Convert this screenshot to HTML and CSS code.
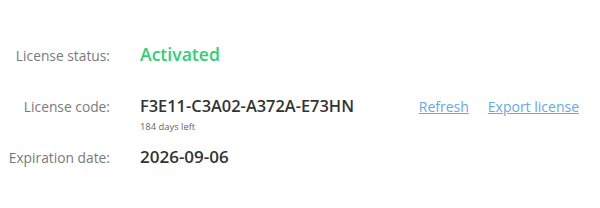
FILE: index.html
```html
<!DOCTYPE html>
<html lang="en">
<head>
  <meta charset="UTF-8" />
  <title>License</title>
  <link rel="stylesheet" href="styles.css">
</head>
<body>
  <div class="license">
    <div class="row status-row">
      <div class="label">License status:</div>
      <div class="value status">Activated</div>
    </div>
    <div class="row code-row">
      <div class="label">License code:</div>
      <div class="value">
        <div class="code-line">
          <span class="code">F3E11-C3A02-A372A-E73HN</span>
          <div class="links">
            <a href="#">Refresh</a>
            <a href="#">Export license</a>
          </div>
        </div>
        <div class="days-left">184 days left</div>
      </div>
    </div>
    <div class="row date-row">
      <div class="label">Expiration date:</div>
      <div class="value date">2026-09-06</div>
    </div>
  </div>
</body>
</html>
```

FILE: styles.css
```css
* {
  margin: 0;
  padding: 0;
  box-sizing: border-box;
}

body {
  background: #ffffff;
  font-family: "Open Sans", "Noto Sans", sans-serif;
  width: 600px;
  height: 208px;
  overflow: hidden;
}

.license {
  padding: 42px 21px 0 0;
  display: flex;
  flex-direction: column;
}

.row {
  display: grid;
  grid-template-columns: 110px 1fr;
  column-gap: 30px;
  align-items: baseline;
  line-height: 24px;
}

.label {
  text-align: right;
  color: #7a7a7a;
  font-size: 13.8px;
}

.value {
  color: #333333;
  font-size: 16.4px;
  font-weight: 600;
}

.status {
  color: #2fcf72;
  font-size: 17.6px;
}

.code-row {
  margin-top: 26px;
}

.code-line {
  display: flex;
  justify-content: space-between;
  align-items: baseline;
}

.links {
  display: flex;
  gap: 19px;
}

.links a {
  color: #64a9ea;
  font-size: 14px;
  font-weight: 400;
}

.days-left {
  color: #666666;
  font-size: 9.4px;
  font-weight: 400;
  line-height: 16px;
}

.date-row {
  margin-top: 10px;
}

.date {
  font-size: 17px;
}
```
